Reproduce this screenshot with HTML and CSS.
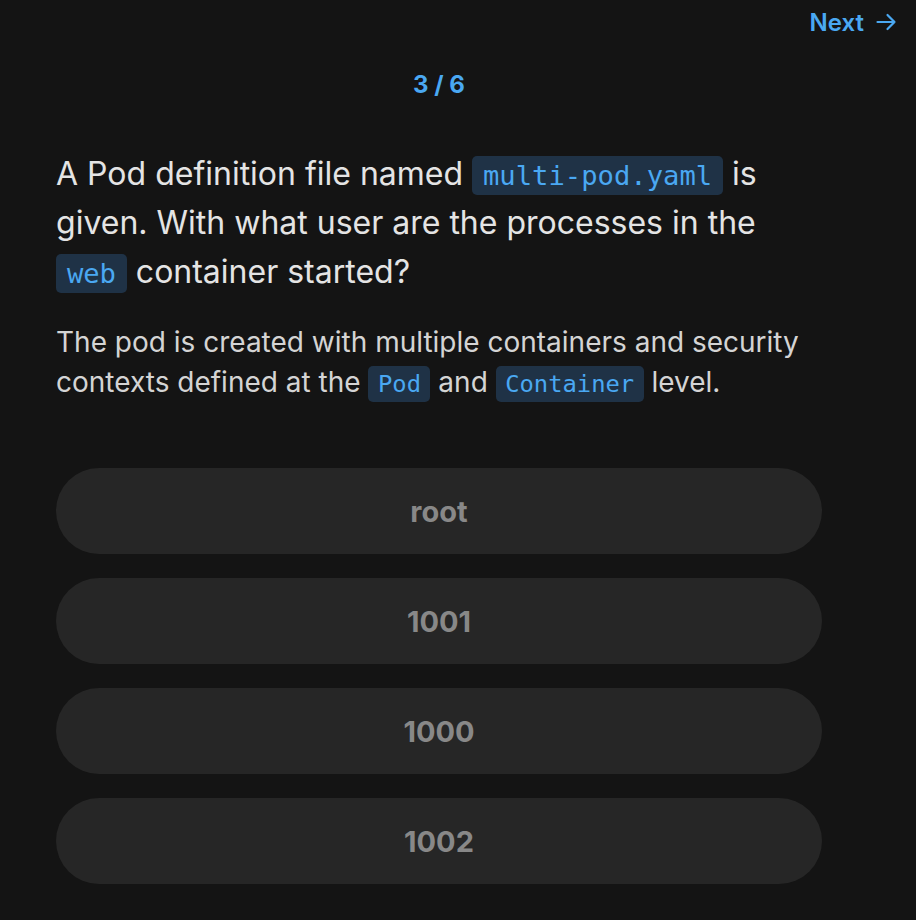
FILE: index.html
```html
<!DOCTYPE html>
<html>
<head>
<meta charset="utf-8">
<link rel="stylesheet" href="styles.css">
</head>
<body>
<div class="page">
  <div class="topbar">
    <a class="next" href="#">Next <svg class="arrow" width="24" height="24" viewBox="0 0 24 24" fill="none" stroke="currentColor" stroke-width="2.2" stroke-linecap="round" stroke-linejoin="round"><path d="M3.5 12h17M13.5 5l7 7-7 7"/></svg></a>
  </div>
  <main class="content">
    <div class="counter">3 / 6</div>
    <h1 class="question">A Pod definition file named <code class="chip">multi-pod.yaml</code> is given. With what user are the processes in the <code class="chip">web</code> container started?</h1>
    <p class="desc">The pod is created with multiple containers and security contexts defined at the <code class="chip">Pod</code> and <code class="chip">Container</code> level.</p>
    <div class="options">
      <button class="option">root</button>
      <button class="option">1001</button>
      <button class="option">1000</button>
      <button class="option">1002</button>
    </div>
  </main>
</div>
</body>
</html>
```
FILE: styles.css
```css
html, body {
  margin: 0;
  padding: 0;
  background: #141414;
}
body {
  font-family: Inter, "Noto Sans", sans-serif;
  color: #e3e3e3;
}
.page {
  width: 916px;
  min-height: 920px;
}
.topbar {
  display: flex;
  justify-content: flex-end;
  padding: 2px 18px 0 0;
  height: 40px;
}
.next {
  display: flex;
  align-items: center;
  gap: 10px;
  color: #4aa8f2;
  font-weight: 600;
  font-size: 24px;
  text-decoration: none;
}
.arrow { display: block; }
.content {
  width: 766px;
  margin: 0 auto 0 56px;
}
.counter {
  text-align: center;
  color: #4aa8f2;
  font-weight: 700;
  font-size: 24px;
  margin-top: 29px;
  line-height: 28px;
}
.question {
  margin: 50px 0 0;
  font-size: 32px;
  font-weight: 400;
  line-height: 49px;
  color: #e4e4e4;
}
.chip {
  font-family: "DejaVu Sans Mono", monospace;
  font-size: 0.85em;
  line-height: 1;
  background: #1f3246;
  color: #4aa8f2;
  border-radius: 5px;
  padding: 0.16em 0.4em;
}
.desc {
  margin: 26px 0 0;
  font-size: 28px;
  line-height: 40px;
  color: #d4d4d4;
}
.options {
  margin-top: 66px;
  display: flex;
  flex-direction: column;
  gap: 24px;
}
.option {
  height: 86px;
  border: 0;
  border-radius: 43px;
  background: #262626;
  color: #888888;
  font-family: Inter, "Noto Sans", sans-serif;
  font-size: 29px;
  font-weight: 700;
  cursor: pointer;
}
```
